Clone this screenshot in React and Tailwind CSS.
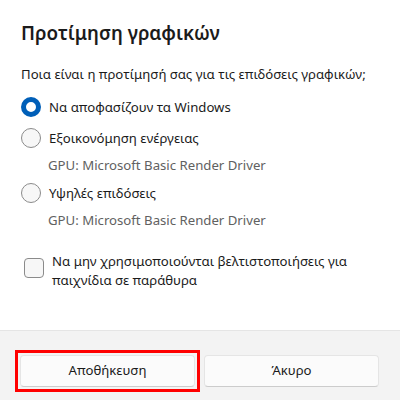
import React from 'react';

function Radio({ checked, label }) {
  return (
    <div className="flex items-center h-5 gap-[8px]">
      {checked ? (
        <span className="w-5 h-5 rounded-full border-[5px] border-[#005fb8] bg-white shrink-0" />
      ) : (
        <span className="w-5 h-5 rounded-full border border-[#8b8b8b] bg-[#f7f7f7] shrink-0" />
      )}
      <span className="leading-5">{label}</span>
    </div>
  );
}

export default function App() {
  return (
    <div
      className="w-[400px] h-[400px] bg-white text-[#1b1b1b] text-[13.2px] flex flex-col overflow-hidden"
      style={{ fontFamily: '"Noto Sans", sans-serif' }}
    >
      <div className="flex-1 flex flex-col px-[21px] pt-[19px]">
        <h1 className="text-[18.8px] font-semibold leading-[28px]">Προτίμηση γραφικών</h1>
        <p className="mt-[17px] leading-5">Ποια είναι η προτίμησή σας για τις επιδόσεις γραφικών;</p>

        <div className="mt-[13px]">
          <Radio checked label="Να αποφασίζουν τα Windows" />
        </div>
        <div className="mt-[11px]">
          <Radio label="Εξοικονόμηση ενέργειας" />
        </div>
        <p className="mt-[7px] ml-[27px] leading-5 text-[#616161]">GPU: Microsoft Basic Render Driver</p>
        <div className="mt-[8px]">
          <Radio label="Υψηλές επιδόσεις" />
        </div>
        <p className="mt-[7px] ml-[27px] leading-5 text-[#616161]">GPU: Microsoft Basic Render Driver</p>

        <div className="mt-[22px] ml-[3px] flex items-start gap-[8px]">
          <span className="mt-[6px] w-5 h-5 rounded-[4px] border border-[#8b8b8b] bg-[#f7f7f7] shrink-0" />
          <span className="leading-[19px]">
            Να μην χρησιμοποιούνται βελτιστοποιήσεις για παιχνίδια σε παράθυρα
          </span>
        </div>
      </div>

      <div className="h-[70px] bg-[#f3f3f3] border-t border-[#e5e5e5] flex items-start gap-[4px] pl-[15px] pt-[19px]">
        <div className="border-[3px] border-[#ff0000] p-[2px]">
          <button className="block w-[175px] h-8 rounded-[4px] bg-[#fbfbfb] border border-[#e5e5e5] border-b-[#cccccc]">
            Αποθήκευση
          </button>
        </div>
        <button className="mt-[5px] w-[175px] h-8 rounded-[4px] bg-[#fbfbfb] border border-[#e5e5e5] border-b-[#cccccc]">
          Άκυρο
        </button>
      </div>
    </div>
  );
}
